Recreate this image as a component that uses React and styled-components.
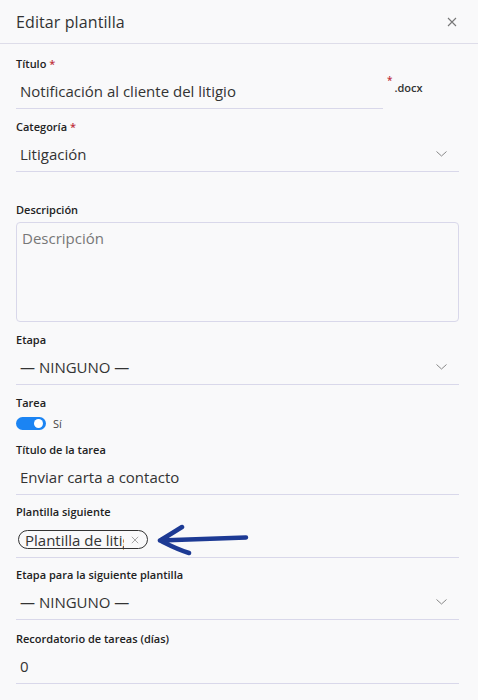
import styled, { createGlobalStyle } from "styled-components";

const GlobalStyle = createGlobalStyle`
  html, body {
    margin: 0;
    padding: 0;
    background: #f9f9fa;
    font-family: "Open Sans", "Noto Sans", sans-serif;
    color: #2c2c2c;
  }
`;

const Panel = styled.div`
  width: 478px;
  height: 700px;
  overflow: hidden;
  background: #f9f9fa;
`;

const Header = styled.div`
  display: flex;
  align-items: center;
  justify-content: space-between;
  height: 43px;
  padding: 0 21px 0 16px;
  border-bottom: 1px solid #dedde9;
`;

const Title = styled.h2`
  margin: 0;
  font-size: 16px;
  font-weight: 400;
  color: #333;
  letter-spacing: 0.1px;
`;

const CloseButton = styled.button`
  display: flex;
  padding: 0;
  border: none;
  background: none;
  color: #777;
`;

const Body = styled.div`
  display: flex;
  flex-direction: column;
  padding: 13px 19px 0 16px;
`;

const Field = styled.div`
  display: flex;
  flex-direction: column;
  margin-bottom: ${(p) => p.$space || 11}px;
`;

const Label = styled.label`
  font-size: 11px;
  line-height: 14px;
  font-weight: 600;
  color: #222;
  margin-bottom: ${(p) => p.$gap || 3}px;
`;

const Req = styled.span`
  color: #c0323c;
`;

const InputRow = styled.div`
  display: flex;
  align-items: flex-start;
`;

const Line = styled.div`
  flex: ${(p) => (p.$grow ? 1 : "none")};
  width: ${(p) => (p.$w ? `${p.$w}px` : "auto")};
  display: flex;
  align-items: center;
  justify-content: space-between;
  height: 34px;
  padding: 0 12px 0 4px;
  border-bottom: 1px solid #d9d8ea;
  font-size: 15px;
  color: #333;
  box-sizing: content-box;
`;

const Suffix = styled.div`
  display: flex;
  align-items: flex-start;
  padding-left: 4px;
  font-size: 11px;
  font-weight: 600;
  color: #333;
  span {
    color: #c0323c;
    font-size: 10px;
    margin-top: -1px;
    margin-right: 2px;
  }
  b {
    font-weight: 600;
    margin-top: 6px;
  }
`;

const TextArea = styled.div`
  height: 88px;
  border: 1px solid #d9d8ea;
  border-radius: 4px;
  padding: 5px 5px;
  font-size: 15px;
  color: #777;
`;

const ToggleRow = styled.div`
  display: flex;
  align-items: center;
  gap: 7px;
  font-size: 11px;
  color: #444;
`;

const Toggle = styled.div`
  width: 30px;
  height: 13px;
  border-radius: 7px;
  background: #1b84f3;
  display: flex;
  align-items: center;
  justify-content: flex-end;
  padding: 0 3px;
  box-sizing: border-box;
  &::after {
    content: "";
    width: 9px;
    height: 9px;
    border-radius: 50%;
    background: #fff;
  }
`;

const ChipLine = styled.div`
  display: flex;
  align-items: center;
  gap: 8px;
  height: 35px;
  padding-left: 2px;
  border-bottom: 1px solid #d9d8ea;
`;

const Chip = styled.div`
  display: flex;
  align-items: center;
  height: 19px;
  width: 130px;
  box-sizing: border-box;
  border: 1px solid #333;
  border-radius: 10px;
  padding: 0 8px 0 6px;
  font-size: 15px;
  color: #333;
  span {
    width: 99px;
    overflow: hidden;
    white-space: nowrap;
  }
`;

const ChipClose = styled.div`
  margin-left: auto;
  display: flex;
  color: #999;
`;

const Chevron = () => (
  <svg width="11" height="6" viewBox="0 0 11 6" fill="none">
    <path d="M0.5 0.5 L5.5 5 L10.5 0.5" stroke="#888" strokeWidth="1" />
  </svg>
);

const Cross = ({ size, color }) => (
  <svg width={size} height={size} viewBox="0 0 10 10" fill="none">
    <path d="M1 1 L9 9 M9 1 L1 9" stroke={color} strokeWidth="1.1" />
  </svg>
);

const Arrow = () => (
  <svg width="94" height="32" viewBox="0 0 94 32">
    <path
      d="M90 13.5 C70 14 40 15 4 16.5 M26 3 C18 8 10 13 4 16.5 C11 20 20 25 33 29"
      stroke="#1d3a94"
      strokeWidth="4.5"
      strokeLinecap="round"
      strokeLinejoin="round"
      fill="none"
    />
  </svg>
);

function SelectLine({ value }) {
  return (
    <Line>
      <span>{value}</span>
      <Chevron />
    </Line>
  );
}

export default function App() {
  return (
    <Panel>
      <GlobalStyle />
      <Header>
        <Title>Editar plantilla</Title>
        <CloseButton>
          <Cross size={10} color="#777" />
        </CloseButton>
      </Header>
      <Body>
        <Field>
          <Label>
            Título <Req>*</Req>
          </Label>
          <InputRow>
            <Line $w={351}>Notificación al cliente del litigio</Line>
            <Suffix>
              <span>*</span>
              <b>.docx</b>
            </Suffix>
          </InputRow>
        </Field>
        <Field $space={31}>
          <Label>
            Categoría <Req>*</Req>
          </Label>
          <SelectLine value="Litigación" />
        </Field>
        <Field>
          <Label $gap={5}>Descripción</Label>
          <TextArea>Descripción</TextArea>
        </Field>
        <Field>
          <Label>Etapa</Label>
          <SelectLine value="— NINGUNO —" />
        </Field>
        <Field $space={12}>
          <Label $gap={6}>Tarea</Label>
          <ToggleRow>
            <Toggle />
            Sí
          </ToggleRow>
        </Field>
        <Field $space={10}>
          <Label>Título de la tarea</Label>
          <Line>Enviar carta a contacto</Line>
        </Field>
        <Field $space={10}>
          <Label>Plantilla siguiente</Label>
          <ChipLine>
            <Chip>
              <span>Plantilla de litigio</span>
              <ChipClose>
                <Cross size={8} color="#999" />
              </ChipClose>
            </Chip>
            <Arrow />
          </ChipLine>
        </Field>
        <Field $space={12}>
          <Label>Etapa para la siguiente plantilla</Label>
          <SelectLine value="— NINGUNO —" />
        </Field>
        <Field>
          <Label>Recordatorio de tareas (días)</Label>
          <Line>0</Line>
        </Field>
      </Body>
    </Panel>
  );
}
